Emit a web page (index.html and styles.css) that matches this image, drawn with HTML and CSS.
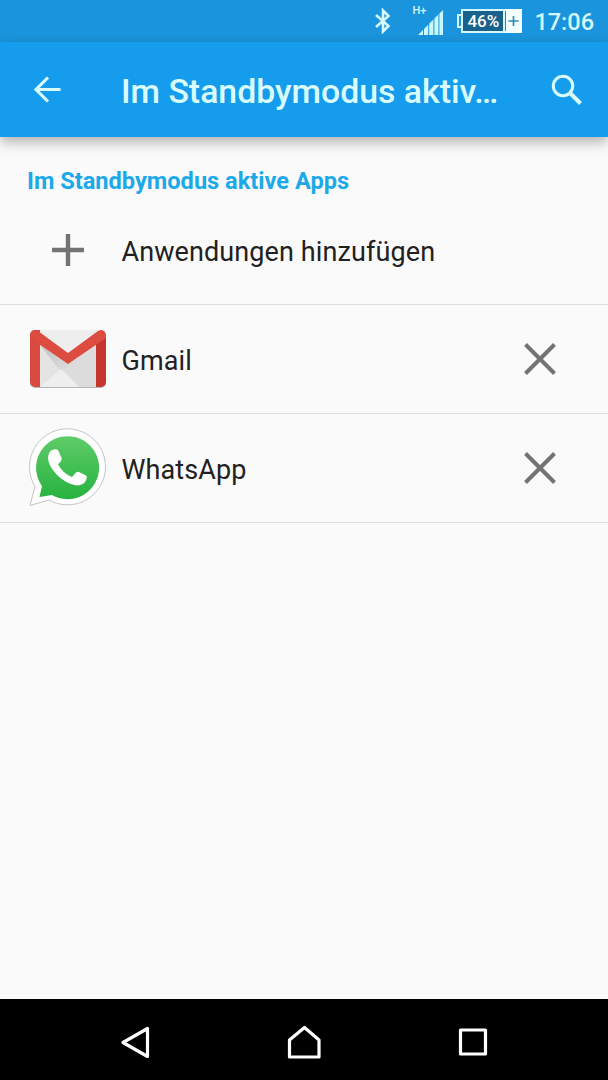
FILE: index.html
```html
<!DOCTYPE html>
<html lang="de">
<head>
    <meta charset="UTF-8">
    <meta name="viewport" content="width=device-width, initial-scale=1.0">
    <title>Im Standbymodus aktive Apps</title>
    <link rel="stylesheet" href="styles.css">
</head>
<body>
    <div class="status-bar">
        <svg class="bluetooth" width="18" height="26" viewBox="0 0 18 26">
            <path d="M2 7 L14.5 18 L9 23.5 V2.5 L14.5 8 L2 19" fill="none" stroke="#d5f8ff" stroke-width="2.6"/>
        </svg>
        <div class="signal">
            <span class="network">H+</span>
            <svg width="26" height="26" viewBox="0 0 26 26">
                <path d="M0 25 L5 20 V25 Z M6 25 V19 L10.2 14.8 V25 Z M11.2 25 V13.8 L15.4 9.6 V25 Z M16.4 25 V8.6 L20.4 4.6 V25 Z M21.4 25 V3.6 L25 0 V25 Z" fill="#c9f6fb"/>
            </svg>
        </div>
        <div class="battery">
            <span class="battery-cap"></span>
            <span class="battery-level">46%</span>
            <svg class="battery-plus" width="17" height="24" viewBox="0 0 17 24">
                <rect width="17" height="24" fill="#f4ffff"/>
                <path d="M0.5 2 V22" stroke="#2b86b5" stroke-width="1"/>
                <path d="M8.5 7 V17 M3.5 12 H13.5" stroke="#2b86b5" stroke-width="1.6"/>
            </svg>
        </div>
        <span class="clock">17:06</span>
    </div>

    <header class="app-bar">
        <svg class="back" width="28" height="28" viewBox="0 0 28 28">
            <path d="M27.5 13.5 H2.5 M15 1.5 L3 13.5 L15 25.5" fill="none" stroke="#d9fcff" stroke-width="3.1"/>
        </svg>
        <h1>Im Standbymodus aktiv…</h1>
        <svg class="search" width="32" height="32" viewBox="0 0 32 32">
            <circle cx="12" cy="12" r="9.7" fill="none" stroke="#d9fcff" stroke-width="3"/>
            <path d="M19 19 L29.5 29.5" stroke="#d9fcff" stroke-width="4"/>
        </svg>
    </header>

    <main>
        <h2>Im Standbymodus aktive Apps</h2>
        <ul class="app-list">
            <li>
                <div class="app-icon">
                    <svg width="32" height="32" viewBox="0 0 32 32">
                        <path d="M16 0 V32 M0 16 H32" stroke="#737373" stroke-width="4.4"/>
                    </svg>
                </div>
                <span class="app-name">Anwendungen hinzufügen</span>
            </li>
            <li>
                <div class="app-icon">
                    <svg class="gmail" width="76" height="58" viewBox="0 0 76 58">
                        <defs>
                            <clipPath id="envelope"><rect width="76" height="57" rx="5"/></clipPath>
                            <linearGradient id="fold" x1="0" y1="0" x2="1" y2="1">
                                <stop offset="0" stop-color="#c4c4c4"/>
                                <stop offset="1" stop-color="#dedede"/>
                            </linearGradient>
                        </defs>
                        <rect y="1" width="76" height="57" rx="5" fill="#b5b5b5"/>
                        <g clip-path="url(#envelope)">
                            <rect width="76" height="57" fill="#e4e4e4"/>
                            <path d="M5 0 H71 L38 25 Z" fill="#eeeeee"/>
                            <path d="M10 14 L38 34 L66 15 V57 H49 Z" fill="#dcdcdc"/>
                            <path d="M10 15 L38 34 L45 30 L31 42 Z" fill="url(#fold)"/>
                            <path d="M10 57 L31 39 L49 57 Z" fill="#eeeeee"/>
                            <path d="M0 0 H10 V57 H0 Z" fill="#d84a3e"/>
                            <path d="M66 12 L76 6 V57 H66 Z" fill="#c5372c"/>
                            <path d="M0 5 Q0 0 5 0 L8 1 L38 23 L68 1 L71 0 Q76 0 76 5 V8 L38 34 L0 8 Z" fill="#dc4c40"/>
                        </g>
                    </svg>
                </div>
                <span class="app-name">Gmail</span>
                <svg class="remove" width="32" height="32" viewBox="0 0 32 32">
                    <path d="M1.5 1.5 L30.5 30.5 M30.5 1.5 L1.5 30.5" stroke="#737373" stroke-width="4"/>
                </svg>
            </li>
            <li>
                <div class="app-icon">
                    <svg width="80" height="80" viewBox="0 0 80 80">
                        <defs>
                            <linearGradient id="green" x1="0" y1="0" x2="0" y2="1">
                                <stop offset="0" stop-color="#5fcc68"/>
                                <stop offset="1" stop-color="#27b23f"/>
                            </linearGradient>
                        </defs>
                        <path class="bubble" d="M2 77.5 L7 58.5 A38 38 0 1 1 21 72 Z"/>
                        <path d="M11.5 69 L14 58 A31.5 31.5 0 1 1 24 67 Z" fill="url(#green)"/>
                        <path d="M22 23.5 Q25 20.5 29 21.5 Q30 22 30.5 23 L33.5 30 Q34 31.5 33 33 L30 36.5 Q34.5 45 44 49 L48 44.5 Q49 43.5 51 44 L58 47.5 Q59.5 48.5 58.5 51 Q56.5 57.5 48.5 57.5 Q38.5 56 29 47 Q20 37 20 30 Q20 26 22 23.5 Z" fill="#fff"/>
                    </svg>
                </div>
                <span class="app-name">WhatsApp</span>
                <svg class="remove" width="32" height="32" viewBox="0 0 32 32">
                    <path d="M1.5 1.5 L30.5 30.5 M30.5 1.5 L1.5 30.5" stroke="#737373" stroke-width="4"/>
                </svg>
            </li>
        </ul>
    </main>

    <nav class="nav-bar">
        <svg width="34" height="34" viewBox="0 0 34 34">
            <path d="M5 17.5 L29.5 3.500 V31.500 Z" fill="none" stroke="#fff" stroke-width="3.2" stroke-linejoin="round"/>
        </svg>
        <svg width="34" height="34" viewBox="0 0 34 34">
            <path d="M2.5 15 L17.5 2.5 L32 15 V32 H2.5 Z" fill="none" stroke="#fff" stroke-width="3.2" stroke-linejoin="round"/>
        </svg>
        <svg width="34" height="34" viewBox="0 0 34 34">
            <rect x="4.5" y="5" width="25" height="24" fill="none" stroke="#fff" stroke-width="3.2" stroke-linejoin="round"/>
        </svg>
    </nav>
</body>
</html>
```
FILE: styles.css
```css
* {
    box-sizing: border-box;
}
body {
    margin: 0;
    height: 1080px;
    display: flex;
    flex-direction: column;
    font-family: Roboto, sans-serif;
    background-color: #fafafa;
    color: #212121;
    overflow: hidden;
}
svg {
    display: block;
    flex-shrink: 0;
}
.status-bar {
    height: 42px;
    padding-right: 14px;
    display: flex;
    align-items: center;
    justify-content: flex-end;
    background-color: #1a94dc;
    color: #d5f8ff;
}
.bluetooth {
    margin-right: 20px;
}
.signal {
    width: 32px;
    height: 30px;
    margin-right: 13px;
    display: grid;
}
.signal > * {
    grid-area: 1 / 1;
}
.signal svg {
    justify-self: end;
    align-self: end;
}
.network {
    font-size: 11px;
    line-height: 10px;
    font-weight: 500;
}
.battery {
    width: 65px;
    height: 24px;
    margin-right: 12px;
    display: flex;
    align-items: center;
    font-weight: 500;
}
.battery-cap {
    width: 4px;
    height: 14px;
    border: 2px solid #d5f8ff;
    border-right: none;
}
.battery-level {
    width: 44px;
    height: 24px;
    border: 2px solid #d5f8ff;
    background-color: #1a618c;
    color: #fff;
    font-size: 17px;
    line-height: 20px;
    text-align: center;
}
.clock {
    padding-top: 2px;
    font-size: 23.5px;
    font-weight: 500;
}
.app-bar {
    height: 95px;
    padding: 0 25px 0 33px;
    display: flex;
    align-items: center;
    background-color: #169cec;
    color: #d9fcff;
    box-shadow: 0 5px 12px rgba(0, 0, 0, 0.3);
}
.app-bar h1 {
    flex: 1;
    margin: 4px 0 0 60px;
    font-size: 33.8px;
    font-weight: 500;
    white-space: nowrap;
}
main {
    flex: 1;
}
h2 {
    height: 59px;
    margin: 0;
    padding: 30px 27px 0;
    font-size: 23.6px;
    line-height: 28px;
    font-weight: 700;
    color: #1ba9ea;
}
.app-list {
    margin: 0;
    padding: 0;
    list-style: none;
}
.app-list li {
    height: 109px;
    padding: 0 52px 0 28px;
    display: flex;
    align-items: center;
    border-bottom: 1px solid #dedede;
}
.app-icon {
    width: 80px;
    margin-right: 13.5px;
    display: flex;
    justify-content: center;
}
.app-name {
    flex: 1;
    padding-top: 3px;
    font-size: 27px;
    letter-spacing: 0.1px;
}
.bubble {
    fill: #fff;
    stroke: #c4c4c4;
    stroke-width: 1;
}
.nav-bar {
    height: 81px;
    padding: 5px 118px 0;
    display: flex;
    align-items: center;
    justify-content: space-between;
    background-color: #000;
}
```
